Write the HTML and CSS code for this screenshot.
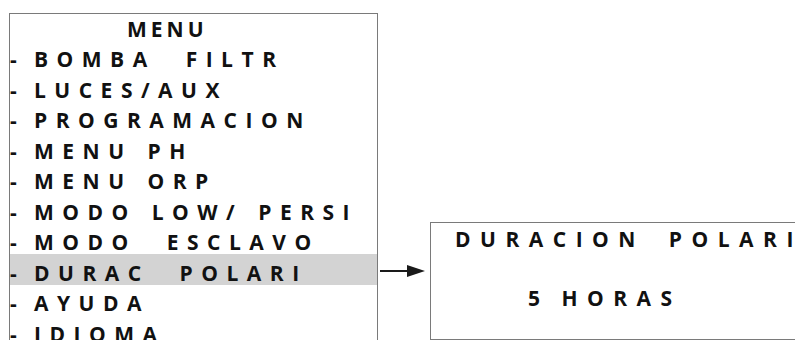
FILE: index.html
```html
<!DOCTYPE html>
<html>
	<head>
		<meta charset="UTF-8">
		<title>Menu duracion polari</title>
		<link rel="stylesheet" href="styles.css">
	</head>
	<body>
		<div class="stage">
			<div class="menu">
				<div class="title">MENU</div>
				<ul>
					<li><span class="dash">-</span><span class="label">BOMBA  FILTR</span></li>
					<li><span class="dash">-</span><span class="label">LUCES/AUX</span></li>
					<li><span class="dash">-</span><span class="label">PROGRAMACION</span></li>
					<li><span class="dash">-</span><span class="label">MENU PH</span></li>
					<li><span class="dash">-</span><span class="label">MENU ORP</span></li>
					<li><span class="dash">-</span><span class="label">MODO LOW/ PERSI</span></li>
					<li><span class="dash">-</span><span class="label">MODO  ESCLAVO</span></li>
					<li class="on"><span class="dash">-</span><span class="label">DURAC  POLARI</span></li>
					<li><span class="dash">-</span><span class="label">AYUDA</span></li>
					<li><span class="dash">-</span><span class="label">IDIOMA</span></li>
				</ul>
			</div>
			<svg class="arrow" width="50" height="14" viewBox="0 0 50 14">
				<line x1="0" y1="7" x2="30" y2="7" stroke="#1a1a1a" stroke-width="2"/>
				<path d="M27 1 L45 7 L27 13 Z" fill="#1a1a1a"/>
			</svg>
			<div class="screen">
				<div class="line">DURACION  POLARI</div>
				<div class="line value">5 HORAS</div>
			</div>
		</div>
	</body>
</html>
```

FILE: styles.css
```css
body{
	margin: 0;
	overflow: hidden;
	background: #fff;
	font-family: "Open Sans", "DejaVu Sans", sans-serif;
	font-weight: 700;
	font-size: 21px;
	color: #111;
}

.stage{
	display: flex;
	align-items: flex-start;
	width: 795px;
	height: 340px;
	overflow: hidden;
}

ul{
	margin: 0;
	padding: 0;
	list-style: none;
}

/* menu de la izquierda */
.menu{
	flex: none;
	width: 367px;
	height: 340px;
	margin: 13px 0 0 9px;
	border: 1px solid #7a7a7a;
	border-bottom: 0;
}
.title{
	padding: 4.5px 0 2px 117px;
	line-height: 20px;
	letter-spacing: 4px;
}
.menu li{
	display: flex;
	height: 30.5px;
	box-sizing: border-box;
	padding-top: 8.5px;
	line-height: 20px;
}
.menu li.on{
	background: #d3d3d3;
}
.dash{
	width: 24px;
	flex: none;
}
.label{
	white-space: pre;
	letter-spacing: 8.5px;
	word-spacing: 1px;
}

.arrow{
	flex: none;
	margin: 264px 0 0 2px;
}

/* pantalla de la derecha */
.screen{
	flex: none;
	width: 420px;
	height: 110px;
	margin-top: 222px;
	border: 1px solid #7a7a7a;
	padding: 5.5px 0 0 24px;
	line-height: 20px;
}
.screen .line{
	white-space: pre;
	letter-spacing: 9.5px;
	word-spacing: -3px;
}
.screen .value{
	margin: 39px 0 0 73px;
}
```
